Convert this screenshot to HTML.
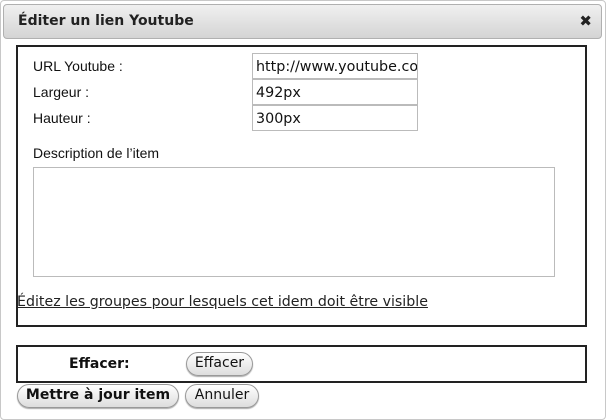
<!DOCTYPE html>
<html><head><meta charset="utf-8"><style>
*{box-sizing:border-box;margin:0;padding:0}
body{width:608px;height:416px;background:#fff;position:relative;overflow:hidden;font-family:"DejaVu Sans",sans-serif}
.abs{position:absolute}
.outer{left:0;top:0;width:606px;height:420px;border:1px solid #c8c8c8;border-radius:4px}
.title{left:3px;top:4px;width:599px;height:35px;border:1px solid #b0b0b0;border-radius:4px;background:linear-gradient(#f0f0f0,#d4d4d4)}
.title span{position:absolute;left:14px;top:8px;font-weight:bold;font-size:14px;color:#222}
.title b{position:absolute;right:9px;top:7px;font-size:15px;color:#222}
.box{border:2px solid #222;left:16px;width:571px}
.lbl{font-family:"Liberation Sans",sans-serif;font-size:14px;color:#111}
.inp{left:252px;width:166px;border:1px solid #bbb;font-size:14.3px;padding:5px 3px 0;color:#111;white-space:nowrap;overflow:hidden;height:26px;background:#fff}
.btn{border:1px solid #999;border-radius:12px;background:linear-gradient(#fff,#ddd);font-size:14px;text-align:center;line-height:21px;height:24px;color:#111;box-shadow:0 1px 1px #aaa;white-space:nowrap}
</style></head><body>
<div class="abs outer"></div>
<div class="abs title"><span>Éditer un lien Youtube</span><b>✖</b></div>
<div class="abs box" style="top:45px;height:282px"></div>
<div class="abs lbl" style="left:33px;top:58px">URL Youtube :</div>
<div class="abs lbl" style="left:33px;top:84px">Largeur :</div>
<div class="abs lbl" style="left:33px;top:110px">Hauteur :</div>
<div class="abs inp" style="top:53px">http://www.youtube.com</div>
<div class="abs inp" style="top:79px">492px</div>
<div class="abs inp" style="top:105px">300px</div>
<div class="abs lbl" style="left:33px;top:145px">Description de l’item</div>
<div class="abs" style="left:33px;top:167px;width:522px;height:110px;border:1px solid #bbb"></div>
<div class="abs" style="left:17px;top:294px;font-size:14.2px;text-decoration:underline;color:#222;white-space:nowrap">Éditez les groupes pour lesquels cet idem doit être visible</div>
<div class="abs box" style="top:345px;height:38px"></div>
<div class="abs" style="left:69px;top:356px;font-size:14px;font-weight:bold;color:#111">Effacer:</div>
<div class="abs btn" style="left:186px;top:352px;width:67px">Effacer</div>
<div class="abs btn" style="left:17px;top:384px;width:162px;font-weight:bold">Mettre à jour item</div>
<div class="abs btn" style="left:185px;top:384px;width:74px">Annuler</div>
</body></html>
